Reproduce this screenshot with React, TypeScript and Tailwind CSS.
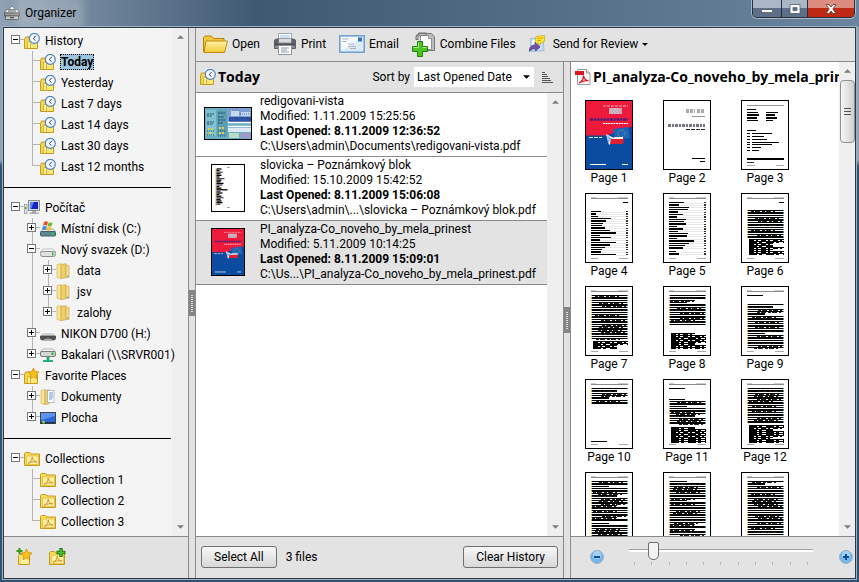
import { useState } from 'react';
import type { ReactNode } from 'react';

type IconName =
  | 'history'
  | 'computer'
  | 'windowsDisk'
  | 'disk'
  | 'camera'
  | 'network'
  | 'folder'
  | 'favorite'
  | 'documents'
  | 'desktop'
  | 'collection';

type TreeNode = {
  label: string;
  icon: IconName;
  open?: boolean;
  expandable?: boolean;
  children?: TreeNode[];
};

const sections: TreeNode[][] = [
  [
    {
      label: 'History',
      icon: 'history',
      open: true,
      children: [
        { label: 'Today', icon: 'history' },
        { label: 'Yesterday', icon: 'history' },
        { label: 'Last 7 days', icon: 'history' },
        { label: 'Last 14 days', icon: 'history' },
        { label: 'Last 30 days', icon: 'history' },
        { label: 'Last 12 months', icon: 'history' },
      ],
    },
  ],
  [
    {
      label: 'Počítač',
      icon: 'computer',
      open: true,
      children: [
        { label: 'Místní disk (C:)', icon: 'windowsDisk', expandable: true },
        {
          label: 'Nový svazek (D:)',
          icon: 'disk',
          open: true,
          children: [
            { label: 'data', icon: 'folder', expandable: true },
            { label: 'jsv', icon: 'folder', expandable: true },
            { label: 'zalohy', icon: 'folder', expandable: true },
          ],
        },
        { label: 'NIKON D700 (H:)', icon: 'camera', expandable: true },
        { label: 'Bakalari (\\\\SRVR001)', icon: 'network', expandable: true },
      ],
    },
    {
      label: 'Favorite Places',
      icon: 'favorite',
      open: true,
      children: [
        { label: 'Dokumenty', icon: 'documents', expandable: true },
        { label: 'Plocha', icon: 'desktop', expandable: true },
      ],
    },
  ],
  [
    {
      label: 'Collections',
      icon: 'collection',
      open: true,
      children: [
        { label: 'Collection 1', icon: 'collection' },
        { label: 'Collection 2', icon: 'collection' },
        { label: 'Collection 3', icon: 'collection' },
      ],
    },
  ],
];

const files = [
  {
    name: 'redigovani-vista',
    modified: '1.11.2009 15:25:56',
    opened: '8.11.2009 12:36:52',
    path: 'C:\\Users\\admin\\Documents\\redigovani-vista.pdf',
    thumb: 'screens',
  },
  {
    name: 'slovicka – Poznámkový blok',
    modified: '15.10.2009 15:42:52',
    opened: '8.11.2009 15:06:08',
    path: 'C:\\Users\\admin\\...\\slovicka – Poznámkový blok.pdf',
    thumb: 'words',
  },
  {
    name: 'PI_analyza-Co_noveho_by_mela_prinest',
    modified: '5.11.2009 10:14:25',
    opened: '8.11.2009 15:09:01',
    path: 'C:\\Us...\\PI_analyza-Co_noveho_by_mela_prinest.pdf',
    thumb: 'cover',
  },
];

/* ---------- icons ---------- */

function FolderBase() {
  return (
    <>
      <path d="M.5 6.500V15.500h13V6.500l-1-1H6l-1-1.500H1.500z" fill="#f3d650" stroke="#c79a1c" />
      <path d="M3.500 15V8.500h3V15" fill="#fdf0a0" stroke="#d3a92c" strokeWidth=".8" />
      <path d="M7 8h6v7H7z" fill="#fbe679" />
    </>
  );
}

function Star({ x = 0, y = 0 }: { x?: number; y?: number }) {
  return (
    <path
      transform={`translate(${x} ${y})`}
      d="M5.500 0l1.600 3.600 3.900.4-2.900 2.700.8 4-3.400-2-3.400 2 .8-4L0 4l3.900-.4z"
      fill="#ffc21a"
      stroke="#d08a08"
      strokeWidth=".8"
    />
  );
}

function CollectionFolder() {
  return (
    <>
      <path d="M.5 14.500v-12l1-1h4l1.500 1.500h8.500v11.500z" fill="#f7dc5a" stroke="#c79a1c" />
      <path d="M2.500 13.500V5h12v8.500z" fill="#fff0a2" stroke="#ddb63c" strokeWidth=".7" />
      <path d="M4 12.500c2.500-1.200 4.300-3.600 4.200-6.500.4 3 2 4.600 4.800 5-3-.6-6-.2-9 1.500z" fill="none" stroke="#c98a2a" strokeWidth=".9" />
    </>
  );
}

const iconArt: Record<IconName, ReactNode> = {
  history: (
    <>
      <FolderBase />
      <circle cx="10.300" cy="5.400" r="5" fill="#f1f8ff" stroke="#4b7fbe" strokeWidth="1.100" />
      <path d="M11.800 2.800L9.300 5.600l2.200 2" fill="none" stroke="#2b3d58" strokeWidth="1" />
    </>
  ),
  computer: (
    <>
      <rect x="4.500" y=".5" width="11" height="10" fill="#d5d8dd" stroke="#8c9099" />
      <rect x="6" y="2" width="8" height="7" fill="#1424c8" />
      <path d="M6 2h4L7 9H6z" fill="#5b86f0" />
      <path d="M8 11h4v1.500h2.500V14h-9v-1.500H8z" fill="#a8abb1" />
      <rect x=".5" y="4.500" width="2.500" height="9" fill="#e3e6e6" stroke="#8b9090" strokeWidth=".7" />
      <rect x="1" y="7" width="1.500" height="2" fill="#41b241" />
    </>
  ),
  windowsDisk: (
    <>
      <path d="M3 8h10l2.500 3H.5z" fill="#e8eef0" stroke="#7b8b90" strokeWidth=".7" />
      <rect x=".5" y="10.500" width="15" height="4.500" rx="1" fill="#5e8793" stroke="#45616a" />
      <rect x="11.500" y="11.500" width="2" height="2.500" fill="#2fce3a" />
      <path d="M4 1c1.500-1 2.500-1 4 0L7 4.700c-1.300-.8-2.500-.8-4 0z" fill="#e8502a" />
      <path d="M8.600 1.200c1.500.8 2.500.8 4 0l-1 3.700c-1.500.8-2.700.8-4 0z" fill="#74b936" />
      <path d="M2.800 5.500c1.500-.8 2.700-.8 4 0l-1 3.500c-1.500-.8-2.500-.8-4 0z" fill="#3d8ad8" />
      <path d="M7.400 5.700c1.300.8 2.500.8 4 0l-1 3.500c-1.500.8-2.500.8-4 0z" fill="#f7c02c" />
    </>
  ),
  disk: (
    <>
      <path d="M3 7h10l2.500 3H.5z" fill="#fafafa" stroke="#a5a8ab" strokeWidth=".7" />
      <rect x=".5" y="9.500" width="15" height="5" rx="2" fill="#dfe1e3" stroke="#8a8d90" />
      <rect x="12" y="10.500" width="1.500" height="3" fill="#25b52b" />
    </>
  ),
  camera: (
    <>
      <path d="M2.500 7h11l2 3H.5z" fill="#d4d5d6" />
      <path d="M.5 10h15v3l-1.500 1H2l-1.500-1z" fill="#515355" stroke="#3a3a3a" strokeWidth=".7" />
      <path d="M3.500 14c1-2 8-2 9 0z" fill="#a6a8aa" />
    </>
  ),
  network: (
    <>
      <path d="M3 2h10l2.500 3H.5z" fill="#f4f5f6" stroke="#9a9da0" strokeWidth=".7" />
      <rect x=".5" y="4.500" width="15" height="5" rx="1.500" fill="#d4d6d8" stroke="#777a7d" />
      <rect x="11.500" y="5.500" width="2" height="2.500" fill="#25b52b" />
      <path d="M6.500 10h3v3H13v2H3v-2h3.500z" fill="#28b077" />
    </>
  ),
  folder: (
    <>
      <path d="M1 1.500l4-1v15l-4-1z" fill="#f8e49a" stroke="#d7b458" strokeWidth=".7" />
      <path d="M5 1.500l5-.8v14l-5 .9z" fill="#edcf6c" stroke="#cda746" strokeWidth=".7" />
      <path d="M10 2l3 .5v12l-3-.3z" fill="#f5df8f" stroke="#cda746" strokeWidth=".7" />
      <path d="M11 14c0-1 1-1.500 1-2.500.5 1 .8 3-1 2.500z" fill="#4a9be6" />
    </>
  ),
  favorite: (
    <>
      <FolderBase />
      <Star x={4} y={0} />
    </>
  ),
  documents: (
    <>
      <path d="M1 1.500l4-1v15l-4-1z" fill="#f8e49a" stroke="#d7b458" strokeWidth=".7" />
      <path d="M5 1.500l4-.8v14l-4 .9z" fill="#edcf6c" stroke="#cda746" strokeWidth=".7" />
      <path d="M7.500 1.500h6.500v12H7.500z" fill="#fbfcfe" stroke="#9aa4b0" strokeWidth=".7" />
      <path d="M9 4h4M9 6h4M9 8h4M9 10h3" stroke="#5b8cc7" strokeWidth=".9" />
    </>
  ),
  desktop: (
    <>
      <rect x=".5" y="2.500" width="15" height="11" fill="#2c66d4" stroke="#3b4554" />
      <path d="M1 3h14v3L1 10z" fill="#5d93ee" />
      <path d="M1 12h14v1.500H1z" fill="#27313f" />
      <circle cx="3.500" cy="12" r="1.500" fill="#8fd05a" />
    </>
  ),
  collection: <CollectionFolder />,
};

function TreeIcon({ name }: { name: IconName }) {
  return (
    <svg viewBox="0 0 16 16" className="h-4 w-4 shrink-0" aria-hidden="true">
      {iconArt[name]}
    </svg>
  );
}

function AppIcon() {
  return (
    <svg viewBox="0 0 16 16" className="h-4 w-4" aria-hidden="true">
      <path d="M4.500 5L8 1l3.500 4z" fill="#fff" stroke="#777" strokeWidth=".8" />
      <path d="M2.500 4.500h11l2 3.500H.5z" fill="#e7e7e7" stroke="#6d6d6d" strokeWidth=".8" />
      <path d="M4 6h8" stroke="#666" />
      <rect x=".5" y="8" width="15" height="3" fill="#9b9b9b" stroke="#555" strokeWidth=".8" />
      <rect x="1.500" y="11" width="13" height="3.500" fill="#c9c9c9" stroke="#555" strokeWidth=".8" />
      <path d="M6 12.700h4" stroke="#333" />
    </svg>
  );
}

function OpenIcon() {
  return (
    <svg viewBox="0 0 26 22" className="h-[22px] w-[26px]" aria-hidden="true">
      <path d="M1.500 19V4.500L3 3h6.500l2 2.500H22V8" fill="#f6c738" stroke="#b97f10" />
      <path d="M2 19.500L4 8h21.500l-3 11.500z" fill="url(#openFront)" stroke="#c08a14" />
      <defs>
        <linearGradient id="openFront" x1="0" y1="0" x2="0" y2="1">
          <stop offset="0" stopColor="#fff3a4" />
          <stop offset="1" stopColor="#f8c937" />
        </linearGradient>
      </defs>
    </svg>
  );
}

function PrintIcon() {
  return (
    <svg viewBox="0 0 24 24" className="h-6 w-6" aria-hidden="true">
      <path d="M5.500 9V1.500h13V9z" fill="#fff" stroke="#9aa6b4" />
      <path d="M7 3h10v5H7z" fill="#cfe2f4" />
      <path d="M1.500 8l2-1h17l2 1v8.500h-21z" fill="#8a8e92" stroke="#5b5f63" />
      <path d="M2 7h3.500v5H2zM18.500 7H22v5h-3.500z" fill="#606468" />
      <path d="M6 7h12v3.500H6z" fill="#d8dcdf" />
      <path d="M2 11.500h20v2H2z" fill="#4a4e53" />
      <path d="M5.500 13.500h13v9h-13z" fill="#fff" stroke="#8c949d" />
      <path d="M8 16h8M8 18h6M8 20h8" stroke="#8d99a5" />
    </svg>
  );
}

function EmailIcon() {
  return (
    <svg viewBox="0 0 26 20" className="h-5 w-[26px]" aria-hidden="true">
      <rect x=".8" y="1.800" width="24.400" height="16.400" fill="#dcebf9" stroke="#6f9fcf" strokeWidth="1.500" />
      <path d="M2 17V3h22z" fill="#fff" opacity=".7" />
      <rect x="19" y="3.500" width="4" height="4" fill="#2f74bd" />
      <path d="M3.500 5h6M3.500 7.500h4M9 10h6M9 12.500h8M11 14.500h6" stroke="#a9b3bd" />
    </svg>
  );
}

function CombineIcon() {
  return (
    <svg viewBox="0 0 24 26" className="h-[26px] w-6" aria-hidden="true">
      <path d="M11.500 2.500h8l3 3V19.500h-11z" fill="#b9bbbd" stroke="#77797b" />
      <path d="M8.500 4.500h8l3 3v11h-11z" fill="#fff" stroke="#8d8f91" />
      <path d="M16.500 4.500v3h3" fill="#ddd" stroke="#8d8f91" />
      <path d="M5 9V5.500L7.500 3h7" fill="none" stroke="#6f7173" strokeWidth="3" />
      <path d="M5 8V6l2.500-2.500h6" fill="none" stroke="#c3c5c7" />
      <path d="M5.500 10.500h5v5h5v5h-5v5h-5v-5h-5v-5h5z" fill="#4dc424" stroke="#23830f" />
      <path d="M6.500 16.500v-5M1.500 16.500h5M10.500 16.500h4" fill="none" stroke="#a5eb83" />
    </svg>
  );
}

function ReviewIcon() {
  return (
    <svg viewBox="0 0 16 18" className="h-[18px] w-4" aria-hidden="true">
      <path d="M1.500 3.500l12.500-1 1 13-13 1z" fill="#c6dcf8" stroke="#8fb2de" strokeWidth=".8" />
      <path d="M3 5l5-.5v5l-5 1z" fill="#f4f9ff" />
      <path d="M7 1.500l8.500-1v6L12 8l-2 3-.5-3H6z" fill="#ffe438" stroke="#d0b01a" strokeWidth=".8" />
      <path d="M8 3.500l6-.5M8 5.500h4" stroke="#c79a10" strokeWidth=".8" />
      <path d="M.5 16.500C0 12 3 10 6 10V7.500l5 4.500-4.500 4v-2.200c-2.500-.3-4.500.4-6 2.700z" fill="#7354a8" stroke="#4c3480" strokeWidth=".7" />
    </svg>
  );
}

function PdfIcon() {
  return (
    <svg viewBox="0 0 16 16" className="h-4 w-4 shrink-0" aria-hidden="true">
      <path d="M2.500.5h9l3.500 3.500v11.500H2.500z" fill="#f6f6f6" stroke="#9b9b9b" />
      <path d="M11.500.5V4H15" fill="#ddd" stroke="#9b9b9b" />
      <rect x="0" y="2" width="9" height="4" fill="#d9151b" />
      <path d="M4 14c2.500-1.200 4.500-4 4.500-7.500.3 3 2 4.800 5 5.200-3-.4-6.500.3-9.500 2.300z" fill="none" stroke="#d9151b" strokeWidth="1.300" />
    </svg>
  );
}

function Arrow({ up, className }: { up?: boolean; className: string }) {
  return (
    <svg viewBox="0 0 8 4" className={className} aria-hidden="true">
      <path d={up ? 'M0 4L4 0l4 4z' : 'M0 0l4 4 4-4z'} fill="currentColor" />
    </svg>
  );
}

/* ---------- tree ---------- */

// One 16px column of the tree lines; the vertical line stops half way on the last child
function Guide({ up, down, across }: { up?: boolean; down?: boolean; across?: boolean }) {
  return (
    <svg viewBox="0 0 16 21" className="absolute inset-0 h-[21px] w-4" stroke="#b4b4b4" aria-hidden="true">
      {up && <path d="M8.500 0v10" />}
      {down && <path d="M8.500 10v11" />}
      {across && <path d="M8 9.500h8" />}
    </svg>
  );
}

type TreeRowProps = {
  node: TreeNode;
  last?: boolean;
  // for each level above, whether its vertical line runs on past this row
  lines?: boolean[];
  root?: boolean;
  selected: string;
  onSelect: (label: string) => void;
};

function TreeRow({ node, last = false, lines = [], root = false, selected, onSelect }: TreeRowProps) {
  const [open, setOpen] = useState(!!node.open);
  const hasToggle = !!node.children || node.expandable;
  const isSelected = selected === node.label;

  return (
    <li>
      <div className="flex h-[21px] items-center">
        {lines.map((more, i) => (
          <span key={i} className="relative h-[21px] w-4 shrink-0">
            <Guide up={more} down={more} />
          </span>
        ))}
        <span className="relative h-[21px] w-4 shrink-0 pt-[5px] pl-[3px]">
          <Guide up={!root} down={!root && !last} across />
          {hasToggle && (
            <button onClick={() => setOpen(!open)} aria-label={`Toggle ${node.label}`} className="relative block">
              <svg viewBox="0 0 9 9" className="h-[9px] w-[9px]" aria-hidden="true">
                <rect x=".5" y=".5" width="8" height="8" fill="#fff" stroke="#777" />
                <path d={open ? 'M2 4.500h5' : 'M2 4.500h5M4.500 2v5'} stroke="#000" />
              </svg>
            </button>
          )}
        </span>
        <TreeIcon name={node.icon} />
        <button
          onClick={() => onSelect(node.label)}
          className={`ml-1 h-4 border leading-[14px] whitespace-nowrap ${
            isSelected ? 'border-dotted border-black bg-[#9cc4de] font-bold' : 'border-transparent'
          }`}
        >
          {node.label}
        </button>
      </div>
      {open && node.children && (
        <ul>
          {node.children.map((child, i) => (
            <TreeRow
              key={child.label}
              node={child}
              last={i === node.children!.length - 1}
              lines={[...lines, !root && !last]}
              selected={selected}
              onSelect={onSelect}
            />
          ))}
        </ul>
      )}
    </li>
  );
}

/* ---------- thumbnails ---------- */

function Cover() {
  return (
    <svg viewBox="0 0 46 68" preserveAspectRatio="none" className="h-full w-full" aria-hidden="true">
      <rect width="46" height="68" fill="#ee1a3c" />
      <path d="M0 34.500h20l26-9v43H0z" fill="#0b4ba0" />
      <rect x="23" y="7" width="13" height="6" fill="#c5a3b0" />
      <path d="M25 8h9M24 10h10M25 12h9" stroke="#dde" strokeWidth=".8" strokeDasharray="2 1" />
      <path d="M17 5h25" stroke="#f3b3c0" strokeDasharray="3 1" />
      <path d="M4 18.500h38" stroke="#4a1e7b" strokeWidth="2.500" strokeDasharray="3 .8 2 .8" />
      <path d="M17 22.500h25" stroke="#fff" strokeDasharray="2 .6" />
      <path d="M27 28l15-2 2 11-15 2z" fill="#1d63b6" />
      <circle cx="35.500" cy="32.500" r="3.500" fill="none" stroke="#8fa36c" strokeDasharray="1 1" />
      <path d="M20 33l10 5-7 6z" fill="#fff" />
      <path d="M21 34l6 4-5 4z" fill="#8fbdf0" />
      <path d="M25 38h13l-1 5H24z" fill="#dd2130" />
      <path d="M28 36h9v2h-9z" fill="#f4f4f4" />
      <path d="M3 36.500h13" stroke="#dfe8f6" strokeDasharray="4 1" />
      <path d="M4 63.500h16M36 63.500h6" stroke="#fff" />
    </svg>
  );
}

function Screens() {
  return (
    <svg viewBox="0 0 46 31" className="h-full w-full" aria-hidden="true">
      <rect width="46" height="31" fill="#69aec6" />
      <rect x="1" y="2" width="10" height="26" fill="#7fc3d2" />
      <rect x="12" y="2" width="10" height="26" fill="#5d9db4" />
      <rect x="23" y="0" width="23" height="15" fill="#7fa0d4" />
      <path d="M26 3h8v5h-8zM36 4h9v4h-9z" fill="#c3d9ee" />
      <path d="M24 9h22v5H24z" fill="#2c4fa3" />
      <path d="M27 2h7M35 6h9M26 11h4M34 12h8" stroke="#4b73a8" strokeDasharray="1 1" />
      <path d="M23 14.500h23M23 18.500h23" stroke="#fff" strokeWidth="1.500" />
      <path d="M23 20h23v4H23z" fill="#dfeaf5" />
      <path d="M24 25h10v5H24z" fill="#b9dcc3" />
      <path d="M36 25h9v5h-9z" fill="#a39acb" />
      <path d="M2 6h7M2 8h5M2 14h7M2 16h6M13 5h7M13 9h6M13 12h7M13 15h5" stroke="#244c58" strokeDasharray="2 .7" />
      <path d="M3 21h5M14 20h6M4 25h4M14 25h5" stroke="#d9cf5a" strokeWidth="2" strokeDasharray="2 1" />
      <path d="M2 23h7M13 23h7M2 27h7M13 28h8" stroke="#205a34" strokeDasharray="1 1" />
    </svg>
  );
}

function Words() {
  const widths = [5, 3, 6, 4, 5, 3, 8, 5, 4, 7, 6, 3, 5, 11, 4, 6, 3, 5, 7, 4, 5, 6, 4];
  return (
    <svg viewBox="0 0 31 46" className="h-full w-full" aria-hidden="true">
      <rect width="31" height="46" fill="#fff" />
      <path d="M3.500 4v37" stroke="#e8a860" />
      {widths.map((w, i) => (
        <path key={i} d={`M4 ${4 + i * 1.6}h${w}`} stroke={i % 4 === 2 ? '#3d4a63' : '#000'} strokeWidth="1.300" />
      ))}
      <path d="M15 2.500h2M15 42.500h2" stroke="#777" />
    </svg>
  );
}

// [from, to, style] bands of text lines, in thumbnail units
type Band = [number, number, 'body' | 'dense' | 'toc' | 'title' | 'right' | 'short'];

const pageBands: Band[][] = [
  [],
  [],
  [],
  [[8, 9, 'right'], [17, 22, 'short'], [24, 62, 'toc']],
  [[8, 54, 'toc'], [57, 61, 'short']],
  [[8, 9, 'right'], [16, 43, 'body'], [45, 53, 'dense'], [55, 60, 'dense']],
  [[8, 52, 'body'], [54, 61, 'dense']],
  [[8, 37, 'body'], [46, 61, 'dense']],
  [[8, 9, 'title'], [17, 61, 'body']],
  [[8, 24, 'body'], [61, 63, 'title']],
  [[8, 9, 'title'], [19, 20, 'title'], [21, 44, 'body'], [47, 61, 'dense']],
  [[8, 43, 'body'], [45, 61, 'dense']],
  [[8, 47, 'body'], [50, 64, 'body']],
  [[8, 64, 'body']],
  [[8, 64, 'body']],
];

function bandLines(band: Band, seed: number) {
  const [from, to, style] = band;
  const step = style === 'dense' ? 2 : 2.4;
  const lines: ReactNode[] = [];
  for (let y = from, i = 0; y <= to; y += step, i++) {
    const n = (i * 7 + seed * 5 + ((i * i) % 11)) % 13;
    let x = 5;
    let w = 37;
    if (style === 'body' && n < 2) w = 18 + n * 8;
    if (style === 'dense') {
      x = 7;
      w = n < 2 ? 24 : 35;
    }
    if (style === 'toc') w = n === 5 ? 25 : 8 + n;
    if (style === 'title') w = 16;
    if (style === 'right') [x, w] = [37, 5];
    if (style === 'short') w = 3 + (n % 8);
    const listed = style === 'toc' || style === 'short';
    lines.push(
      <g key={`${from}-${i}`}>
        {listed && <path d={`M${x + w} ${y + 1}H40`} stroke="#e2e2e2" strokeWidth=".8" />}
        <path d={`M${x} ${y + 0.5}h${w}`} stroke="#000" strokeWidth="1.400" />
        {style === 'dense' && <path d={`M${x} ${y + 1.5}h${w}`} stroke="#000" strokeDasharray={n % 2 ? '5 2 2 3' : '8 2 3 4'} />}
        {style === 'body' && n % 3 > 0 && <path d={`M${x + n} ${y + 1.5}h${Math.min(w - n, 24)}`} stroke="#222" strokeDasharray="3 1 5 2" />}
        {listed && <path d={`M40 ${y + 0.5}h1.500`} stroke="#332" strokeWidth="1.200" />}
        {style === 'body' && <path d={`M5 ${y + 0.5}h1`} stroke="#c9a63a" strokeWidth="1.500" />}
        {style === 'body' && w === 37 && <path d={`M41 ${y + 0.5}h1`} stroke="#4a8a9c" strokeWidth="1.500" />}
      </g>
    );
  }
  return lines;
}

function PageArt({ index }: { index: number }) {
  if (index === 0) return <Cover />;
  return (
    <svg viewBox="0 0 46 68" className="h-full w-full" shapeRendering="crispEdges" aria-hidden="true">
      <rect width="46" height="68" fill="#fff" />
      {index === 1 && (
        <>
          <path d="M22 10h9M33 10h8" stroke="#aaa" strokeWidth="4" strokeDasharray="3 1" />
          <path d="M28 15.500h13" stroke="#999" />
          <path d="M4 24.500h37" stroke="#777183" strokeWidth="3" strokeDasharray="3 1 2 1" />
          <path d="M22 28.500h19" stroke="#222" strokeDasharray="4 1" />
          <path d="M28 57.500h13M36 60.500h5" stroke="#000" />
        </>
      )}
      {index === 2 && (
        <>
          <path d="M5 4.500h37" stroke="#999" />
          <path d="M5 8.500h9M5 11.500h11M5 14h12M5 17h10M5 19.500h11M24 11.500h12M24 14h9M24 17h11M24 19.500h7" stroke="#000" strokeWidth="1.500" />
          <path d="M5 29.500h9M5 32.500h3M10 32.500h20M5 35.500h3M10 35.500h12M5 38.500h3M10 38.500h15M5 41.500h3M10 41.500h27M5 43.500h3M10 43.500h20M5 46.500h3M10 46.500h9M5 49.500h3M10 49.500h7" stroke="#000" />
          <path d="M5 58h37" stroke="#000" strokeWidth="2" />
          <path d="M5 61.500h7" stroke="#333" />
          <path d="M5 64.500h8M34 64.500h8" stroke="#aaa" />
        </>
      )}
      {index > 2 && (
        <>
          <path d="M5 4.500h37" stroke="#8a8a8a" />
          <path d="M5 3.500h5M32 3.500h10" stroke="#ccc" />
          {pageBands[index].map((band, i) => bandLines(band, index + i))}
          <path d="M5 64.500h7M33 64.500h9" stroke="#aaa" />
        </>
      )}
    </svg>
  );
}

/* ---------- panels ---------- */

function ScrollColumn({ thumb }: { thumb?: boolean }) {
  return (
    <div className="flex w-4 shrink-0 flex-col items-center bg-[#efefef] text-[#7d7d7d]">
      <button aria-label="Scroll up" className="flex h-[18px] w-full items-center justify-center">
        <Arrow up className="h-1 w-[7px]" />
      </button>
      {thumb && (
        <div className="flex h-[63px] w-[15px] flex-col items-center justify-center gap-[2px] rounded-sm border border-[#8f8f8f] bg-linear-to-r from-[#f6f6f6] to-[#cfcfcf]">
          <i className="h-px w-[7px] bg-[#555]" />
          <i className="h-px w-[7px] bg-[#555]" />
          <i className="h-px w-[7px] bg-[#555]" />
        </div>
      )}
      <button aria-label="Scroll down" className="mt-auto flex h-[18px] w-full items-center justify-center">
        <Arrow className="h-1 w-[7px]" />
      </button>
    </div>
  );
}

function Splitter() {
  return (
    <div className="flex w-2 shrink-0 items-center border-x border-[#8a8a8a] bg-[#e2e2e2]">
      <div className="flex h-[26px] w-full flex-col items-center justify-center gap-px bg-[#858585]">
        {Array.from({ length: 9 }, (_, i) => (
          <i key={i} className="h-px w-0.5 bg-[#dcdcdc]" />
        ))}
      </div>
    </div>
  );
}

function Sidebar() {
  const [selected, setSelected] = useState('Today');

  return (
    <aside className="flex w-[184px] shrink-0 flex-col">
      <div className="flex min-h-0 flex-1 bg-[#f4f4f4]">
        <nav className="relative z-10 min-w-0 flex-1 overflow-x-visible overflow-y-clip pt-0.5 pr-px">
          {sections.map((nodes, i) => (
            <ul key={i} className={`pl-1 ${i > 0 ? 'mt-[10px] border-t border-black pt-[9px]' : ''}`}>
              {nodes.map(node => (
                <TreeRow key={node.label} node={node} root selected={selected} onSelect={setSelected} />
              ))}
            </ul>
          ))}
        </nav>
        <ScrollColumn />
      </div>
      <div className="flex h-[42px] items-center gap-4 border-t border-[#8a8a8a] bg-[#e2e2e2] px-3 pb-0.5">
        <button aria-label="Add favorite place">
          <svg viewBox="0 0 17 17" className="h-[17px] w-[17px]" aria-hidden="true">
            <path d="M2.500 16.500v-9l1-1h10v10z" fill="#f8de6a" stroke="#c79a1c" />
            <path d="M5.500 16V9.500h7V16" fill="#fdf0a0" />
            <Star x={5} y={1} />
            <path d="M3.500 0v6M.5 3h6" stroke="#2d9a1c" strokeWidth="2" />
          </svg>
        </button>
        <button aria-label="Add collection">
          <svg viewBox="0 0 17 17" className="h-[17px] w-[17px]" aria-hidden="true">
            <g transform="translate(0 2)">
              <CollectionFolder />
            </g>
            <path d="M12 0v9M7.500 4.500h9" stroke="#1f7d12" strokeWidth="3.400" />
            <path d="M12 1v7M8.500 4.500h7" stroke="#4fc236" strokeWidth="1.600" />
          </svg>
        </button>
      </div>
    </aside>
  );
}

function Toolbar() {
  return (
    <div className="flex h-[34px] shrink-0 items-center gap-[13px] border-b border-[#8a8a8a] bg-[#e3e3e3] pb-px pl-1.5 whitespace-nowrap">
      <button className="flex items-center gap-1"><OpenIcon />Open</button>
      <button className="flex items-center gap-1"><PrintIcon />Print</button>
      <button className="flex items-center gap-1"><EmailIcon />Email</button>
      <button className="flex items-center gap-1"><CombineIcon />Combine Files</button>
      <button className="flex items-center gap-2">
        <ReviewIcon />
        <span className="flex items-center gap-1">
          Send for Review
          <Arrow className="h-[3px] w-[6px]" />
        </span>
      </button>
    </div>
  );
}

function FileThumb({ kind }: { kind: string }) {
  if (kind === 'screens') {
    return <div className="h-[33px] w-12 border border-black"><Screens /></div>;
  }
  return (
    <div className="h-12 w-[34px] border border-black">
      {kind === 'words' ? <Words /> : <Cover />}
    </div>
  );
}

function FileList() {
  const [active, setActive] = useState(2);

  return (
    <section className="flex min-w-0 flex-[367_1_0%] flex-col">
      <header className="flex h-[31px] shrink-0 items-center border-b border-[#8a8a8a] bg-[#e3e3e3] pr-[9px] pl-1">
        <TreeIcon name="history" />
        <h1 className="ml-0.5 font-['Open_Sans','Noto_Sans',sans-serif] text-sm font-bold">Today</h1>
        <label htmlFor="sort" className="mr-1 ml-auto">Sort by</label>
        <div className="relative">
          <select id="sort" className="h-5 w-[120px] appearance-none bg-white pl-[3px] outline-none">
            <option>Last Opened Date</option>
            <option>Name</option>
            <option>Modified Date</option>
          </select>
          <Arrow className="pointer-events-none absolute top-2 right-1 h-1 w-[7px]" />
        </div>
        <button aria-label="Sort direction" className="ml-2">
          <svg viewBox="0 0 12 12" className="h-3 w-3" stroke="#555" aria-hidden="true">
            <path d="M0 1.500h3M0 3.500h5M0 5.500h6M0 7.500h8M0 9.500h9M0 11.500h11" />
          </svg>
        </button>
      </header>
      <div className="flex min-h-0 flex-1 bg-white">
        <ul className="min-w-0 flex-1 overflow-hidden">
          {files.map((file, i) => (
            <li
              key={file.name}
              onClick={() => setActive(i)}
              className={`flex h-16 items-center gap-2 border-b border-[#8a8a8a] pb-0.5 pl-2 whitespace-nowrap ${
                active === i ? 'bg-[#e3e3e3]' : ''
              }`}
            >
              <div className="flex w-12 shrink-0 justify-center">
                <FileThumb kind={file.thumb} />
              </div>
              <div className="leading-[15px]">
                <p>{file.name}</p>
                <p>Modified: {file.modified}</p>
                <p className="font-bold">Last Opened: {file.opened}</p>
                <p>{file.path}</p>
              </div>
            </li>
          ))}
        </ul>
        <ScrollColumn />
      </div>
      <footer className="flex h-[42px] shrink-0 items-center border-t border-[#8a8a8a] bg-[#e3e3e3] px-[5px] pb-0.5">
        <button className="h-[22px] rounded-[3px] border border-[#707070] bg-linear-to-b from-[#f7f7f7] to-[#d8d8d8] px-3">
          Select All
        </button>
        <span className="ml-[9px]">3 files</span>
        <button className="ml-auto h-[22px] rounded-[3px] border border-[#707070] bg-linear-to-b from-[#f7f7f7] to-[#d8d8d8] px-3">
          Clear History
        </button>
      </footer>
    </section>
  );
}

function ZoomButton({ label, path, onClick }: { label: string; path: string; onClick: () => void }) {
  return (
    <button aria-label={label} onClick={onClick} className="shrink-0">
      <svg viewBox="0 0 14 14" className="h-[14px] w-[14px]" aria-hidden="true">
        <circle cx="7" cy="7" r="6.400" fill="#78b7ea" stroke="#8badc9" />
        <circle cx="7" cy="5" r="4" fill="#b4dcf8" opacity=".7" />
        <path d={path} stroke="#0d4f96" strokeWidth="2" />
      </svg>
    </button>
  );
}

function Preview() {
  const [zoom, setZoom] = useState(11);

  return (
    <section className="flex min-w-0 flex-[284_1_0%] flex-col">
      <div className="flex min-h-0 flex-1 bg-white">
        <div className="min-w-0 flex-1 overflow-hidden">
          <h2 className="mb-2 flex h-[30px] items-center gap-0.5 pl-1 font-['Open_Sans','Noto_Sans',sans-serif] text-sm font-bold whitespace-nowrap">
            <PdfIcon />
            PI_analyza-Co_noveho_by_mela_prinest
          </h2>
          <ol className="flex flex-wrap gap-x-[30px] pl-[14px]">
            {pageBands.map((_, i) => (
              <li key={i} className="flex h-[93px] w-12 flex-col items-center whitespace-nowrap">
                <div className="h-[70px] w-12 shrink-0 border border-black">
                  <PageArt index={i} />
                </div>
                <span className="leading-4">Page {i + 1}</span>
              </li>
            ))}
          </ol>
        </div>
        <ScrollColumn thumb />
      </div>
      <footer className="flex h-[42px] shrink-0 items-center border-t border-[#8a8a8a] bg-[#e3e3e3] pr-0.5 pb-px pl-[19px]">
        <ZoomButton label="Zoom out" path="M4 7h6" onClick={() => setZoom(Math.max(0, zoom - 10))} />
        <div className="mr-[26px] ml-[25px] flex min-w-0 flex-1 flex-col pb-2">
          <input
            type="range"
            min={0}
            max={100}
            value={zoom}
            onChange={e => setZoom(Number(e.target.value))}
            aria-label="Thumbnail size"
            className="h-[18px] w-full appearance-none bg-transparent [&::-webkit-slider-runnable-track]:h-[3px] [&::-webkit-slider-runnable-track]:border-t [&::-webkit-slider-runnable-track]:border-[#a5a5a5] [&::-webkit-slider-runnable-track]:bg-white [&::-webkit-slider-thumb]:-mt-2 [&::-webkit-slider-thumb]:h-[18px] [&::-webkit-slider-thumb]:w-[11px] [&::-webkit-slider-thumb]:appearance-none [&::-webkit-slider-thumb]:rounded-t-[2px] [&::-webkit-slider-thumb]:rounded-b-[5px] [&::-webkit-slider-thumb]:border [&::-webkit-slider-thumb]:border-[#6e6e6e] [&::-webkit-slider-thumb]:bg-[#f4f4f4]"
          />
          <div className="flex justify-between px-[5px] pt-0.5">
            {Array.from({ length: 11 }, (_, i) => (
              <i key={i} className="h-[3px] w-px bg-[#b9b9b9]" />
            ))}
          </div>
        </div>
        <ZoomButton label="Zoom in" path="M4 7h6M7 4v6" onClick={() => setZoom(Math.min(100, zoom + 10))} />
      </footer>
    </section>
  );
}

function TitleBar() {
  return (
    <div className="-mx-[3px] flex h-[27px] shrink-0 items-start justify-between bg-linear-to-r from-[#8fa1b4] via-[#3f5973] via-30% to-[#6c859f] px-1">
      <div className="flex items-center gap-[5px] pt-[5px]">
        <AppIcon />
        <span className="bg-white/20 leading-4 shadow-[0_0_8px_8px_rgba(255,255,255,0.2)]">Organizer</span>
      </div>
      <div className="flex h-[18px] overflow-hidden rounded-b-[5px] border border-t-0 border-[#26303d] shadow-[0_0_0_1px_rgba(255,255,255,0.45)]">
        <button aria-label="Minimize" className="flex w-7 items-center justify-center bg-linear-to-b from-[#a9b7c6] from-50% to-[#5d7087] to-50%">
          <svg viewBox="0 0 12 10" className="h-[10px] w-3" aria-hidden="true">
            <rect x=".5" y="5.500" width="11" height="3" fill="#fff" stroke="#525c69" strokeWidth=".8" />
          </svg>
        </button>
        <button aria-label="Maximize" className="flex w-[27px] items-center justify-center border-x border-[#26303d] bg-linear-to-b from-[#a9b7c6] from-50% to-[#5d7087] to-50%">
          <svg viewBox="0 0 12 10" className="h-[10px] w-3" aria-hidden="true">
            <path d="M1 .5h10v9H1zM4 3.500v3h4v-3z" fill="#fff" fillRule="evenodd" stroke="#525c69" strokeWidth=".8" />
          </svg>
        </button>
        <button aria-label="Close" className="flex w-[46px] items-center justify-center bg-linear-to-b from-[#dd8d80] from-45% to-[#bc2a14] to-50%">
          <svg viewBox="0 0 12 10" className="h-[10px] w-3" aria-hidden="true">
            <path d="M1 .5h3l2 2.500L8 .5h3L7.800 5 11 9.500H8L6 7 4 9.500H1L4.200 5z" fill="#fff" stroke="#5e3430" strokeWidth=".8" />
          </svg>
        </button>
      </div>
    </div>
  );
}

export default function App() {
  return (
    <div className="flex h-screen flex-col bg-linear-to-b from-[#8fa3b7] from-[160px] to-[#34526f] to-[166px] px-[3px] pb-[3px] font-['Roboto','Open_Sans',sans-serif] text-xs text-black">
      <TitleBar />
      <main className="flex min-h-0 flex-1 border border-[#2b3947] bg-[#e3e3e3] shadow-[0_0_0_1px_#9fb3c6]">
        <Sidebar />
        <Splitter />
        <div className="flex min-w-0 flex-1 flex-col">
          <Toolbar />
          <div className="flex min-h-0 flex-1">
            <FileList />
            <Splitter />
            <Preview />
          </div>
        </div>
      </main>
    </div>
  );
}
